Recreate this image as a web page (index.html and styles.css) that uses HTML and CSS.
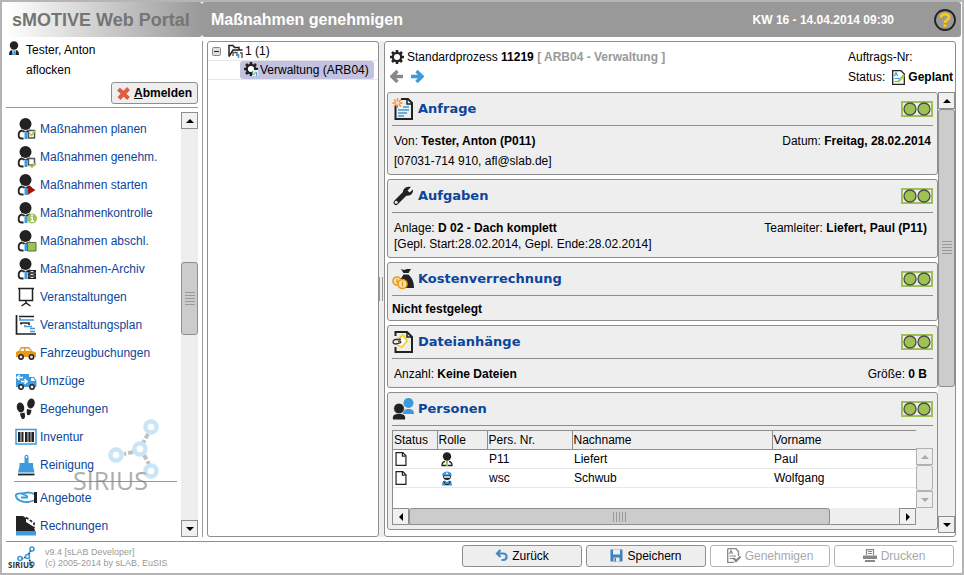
FILE: index.html
```html
<!DOCTYPE html>
<html lang="de">
<head>
<meta charset="utf-8">
<title>sMOTIVE Web Portal</title>
<link rel="stylesheet" href="styles.css">
</head>
<body>
<svg class="defs" aria-hidden="true">
  <symbol id="person" viewBox="0 0 20 22">
    <circle cx="9.500" cy="6" r="6" fill="#222"/>
    <path d="M6 12.500C3 13 2.500 15.500 2.700 18C2.800 20 4 20.500 6 20.500H7.500" fill="none" stroke="#222" stroke-width="1.800"/>
    <path d="M5 11.500L9.500 13L14 11.500L16.500 14.500H12L9.500 13.500L7 14.500Z" fill="#222"/>
    <path d="M8.500 14H11.500V21H8.500Z" fill="#3d9bdc"/>
  </symbol>
  <symbol id="gear" viewBox="0 0 16 16">
    <path d="M8 0V16M0 8H16M2.300 2.300L13.700 13.700M13.700 2.300L2.300 13.700" stroke="#222" stroke-width="3"/>
    <circle cx="8" cy="8" r="4.800" fill="#fff" stroke="#222" stroke-width="2.600"/>
  </symbol>
  <symbol id="lights" viewBox="0 0 32 16">
    <rect x="1" y="1" width="30" height="14" fill="#ececec" stroke="#9dc154" stroke-width="2"/>
    <circle cx="9" cy="8" r="6" fill="#9fc255" stroke="#4b4b4b" stroke-width="1.300"/>
    <circle cx="23" cy="8" r="6" fill="#9fc255" stroke="#4b4b4b" stroke-width="1.300"/>
  </symbol>
  <symbol id="page" viewBox="0 0 12 15">
    <path d="M.7.7H8L11.300 4V14.300H.7Z" fill="#fff" stroke="#222" stroke-width="1.300"/>
    <path d="M7.500 1V4.500H11" fill="none" stroke="#222" stroke-width="1.300"/>
  </symbol>
  <symbol id="up" viewBox="0 0 8 4"><path d="M4 0L8 4H0Z" fill="currentColor"/></symbol>
  <symbol id="down" viewBox="0 0 8 4"><path d="M0 0H8L4 4Z" fill="currentColor"/></symbol>
  <symbol id="molecule" viewBox="0 0 54 64">
    <path d="M41 17L36 26M26 35L17 37M37 38L42 47" stroke="#999" stroke-width="4" stroke-dasharray="5 2"/>
    <g fill="none" stroke="currentColor" stroke-width="4.500">
      <circle cx="44" cy="10" r="5.500"/><circle cx="33" cy="32" r="5.500"/><circle cx="9" cy="38" r="5.500"/><circle cx="44" cy="54" r="5.500"/>
    </g>
  </symbol>
</svg>

<div class="app">
  <header class="top">
    <div class="brand">sMOTIVE Web Portal</div>
    <div class="titlebar">
      <h1>Maßnahmen genehmigen</h1>
      <span class="clock">KW 16 - 14.04.2014 09:30</span>
      <button class="help" aria-label="Hilfe"><svg width="22" height="22" viewBox="0 0 22 22"><circle cx="11" cy="11" r="10" fill="#999" stroke="#222" stroke-width="1.800"/><path d="M7 8.500C7 4 15 4 15 8.200C15 11 11 10.800 11 14" fill="none" stroke="#fc0" stroke-width="2.800"/><path d="M9.500 15.500H12.500V18H9.500Z" fill="#fc0"/></svg></button>
    </div>
  </header>

  <div class="main">
    <aside class="sidebar">
      <div class="user">
        <svg width="12" height="16" viewBox="0 0 12 16"><circle cx="6" cy="4.500" r="4.200" fill="#222"/><path d="M1 14C1 11 2 9.500 4 9H8C10 9.500 11 11 11 14Z" fill="#222"/><path d="M4 9H8L7.500 14H4.500Z" fill="#a8d8f5"/><path d="M5.500 10H7V14H5.500Z" fill="#3d9bdc"/></svg>
        <div>Tester, Anton<br>aflocken</div>
      </div>
      <div class="logout"><button class="btn logout-btn"><svg width="13" height="13" viewBox="0 0 13 13"><path d="M1.500 2L11.500 11.500M11.500 1.500L2 11.500" stroke="#dd5f43" stroke-width="4"/></svg><span><u>A</u>bmelden</span></button></div>
      <div class="nav-area">
        <nav class="menu">
          <a href="#"><svg width="22" height="22"><use href="#person" x="1" width="20" height="22"/><path d="M13.500 12.500H19.500V20H13.500Z" fill="#fff" stroke="#555" stroke-width="1.500"/><path d="M14.500 15L16.500 17.500L20.500 12" fill="none" stroke="#9c5" stroke-width="1.500"/></svg>Maßnahmen planen</a>
          <a href="#"><svg width="22" height="22"><use href="#person" x="1" width="20" height="22"/><path d="M13.500 12.500H19.500V19H13.500Z" fill="#fff" stroke="#555" stroke-width="1.500"/><path d="M14.500 19L17 21L21 17" fill="none" stroke="#9c5" stroke-width="1.800"/></svg>Maßnahmen genehm.</a>
          <a href="#"><svg width="22" height="22"><use href="#person" x="1" width="20" height="22"/><path d="M12.500 11V21L20.500 16Z" fill="#a01010"/></svg>Maßnahmen starten</a>
          <a href="#"><svg width="22" height="22"><use href="#person" x="1" width="20" height="22"/><circle cx="17" cy="16.500" r="5" fill="#9fc255"/><path d="M15.500 15.500H17.300V19M15.500 19.300H19M16.200 13.300H17.900" fill="none" stroke="#fff" stroke-width="1.400"/></svg>Maßnahmenkontrolle</a>
          <a href="#"><svg width="22" height="22"><use href="#person" x="1" width="20" height="22"/><path d="M12.500 12.500H21V21H12.500Z" fill="#9fc255" stroke="#58703a"/></svg>Maßnahmen abschl.</a>
          <a href="#"><svg width="22" height="22"><use href="#person" x="1" width="20" height="22"/><path d="M13 12H21V21H13Z" fill="#222"/><path d="M13 15H21M13 18H21" stroke="#777"/><path d="M15.500 13.500H18.500M15.500 16.500H18.500M15.500 19.500H18.500" stroke="#ddd"/></svg>Maßnahmen-Archiv</a>
          <a href="#"><svg width="22" height="22" viewBox="0 0 22 22"><path d="M3 2.500H19M4.500 2.500V14.500H17.500V2.500M11 15V17M6.500 20L11 17L15.500 20" fill="none" stroke="#222" stroke-width="1.500"/></svg>Veranstaltungen</a>
          <a href="#"><svg width="22" height="22" viewBox="0 0 22 22"><path d="M1.500 1V20H21M4 2.500H19M6 10.500V9H14V11" fill="none" stroke="#222" stroke-width="1.700"/><path d="M5 4V6H19M10 11V12.500H17M15 14.500H20M15 17.500H20" fill="none" stroke="#3d9bdc" stroke-width="1.700"/></svg>Veranstaltungsplan</a>
          <a href="#"><svg width="22" height="22" viewBox="0 0 22 22"><path d="M1 14V10L4 8.500L6 5H14L17 9L21 10.500V15H1Z" fill="#e59a18"/><path d="M5 9L7 6.500H9V9ZM10.500 6.500H13.500L15.500 9H10.500Z" fill="#fff"/><circle cx="6" cy="15" r="2.200" fill="#ddd" stroke="#222" stroke-width="1.500"/><circle cx="16.500" cy="15" r="2.200" fill="#ddd" stroke="#222" stroke-width="1.500"/></svg>Fahrzeugbuchungen</a>
          <a href="#"><svg width="22" height="22" viewBox="0 0 22 22"><path d="M1 4H14V7H19L21.500 11V17H1Z" fill="#3d9bdc"/><path d="M16 8H18.500L20 11H16Z" fill="#fff"/><path d="M2 7.500H8M4.500 5L2 7.500L4.500 10M6 11.500H12M9.500 9L12 11.500L9.500 14" fill="none" stroke="#fff" stroke-width="1.500"/><circle cx="6" cy="17" r="2.200" fill="#eee" stroke="#222" stroke-width="1.500"/><circle cx="17" cy="17" r="2.200" fill="#eee" stroke="#222" stroke-width="1.500"/></svg>Umzüge</a>
          <a href="#"><svg width="22" height="22" viewBox="0 0 22 22"><g fill="#222"><ellipse cx="5.500" cy="9.500" rx="3.700" ry="5" transform="rotate(-12 5.500 9.500)"/><path d="M5 15.500L9.500 14.500C11 20 9 21.500 7.500 21C6 20.500 5.500 18 5 15.500Z"/><ellipse cx="16" cy="5.500" rx="3.700" ry="5" transform="rotate(12 16 5.500)"/><path d="M12 11L16.500 12C16 16 15 17.500 13 17.300C11.500 17 11.500 14 12 11Z"/></g></svg>Begehungen</a>
          <a href="#"><svg width="22" height="22" viewBox="0 0 22 22"><rect x="1" y="3.500" width="20" height="14.500" fill="#fff" stroke="#3d9bdc" stroke-width="1.500"/><path d="M4 6V16M7.500 6V16M11 6V16M14.500 6V16M18 6V16" stroke="#222" stroke-width="2"/><path d="M5.800 6V16M12.800 6V16M16.300 6V16" stroke="#222" stroke-width=".8"/></svg>Inventur</a>
          <a href="#"><svg width="22" height="22" viewBox="0 0 22 22"><path d="M9.500 9V3C9.500 0 13.500 0 13.500 3V9H18V12L19.500 18.500H3L4.500 12V9Z" fill="#3d9bdc"/><path d="M11.500 2V4" stroke="#fff" stroke-width="1.300"/><path d="M3 20.500H19.500" stroke="#222" stroke-width="1.800"/></svg>Reinigung</a>
          <hr>
          <a href="#"><svg width="22" height="22" viewBox="0 0 22 22"><path d="M19 7C14 4 10 6 7 6.500C3 6 0 7 1 9.500C2 13.500 8 15.500 13 15L19 13.500M7 7C10 8 13 9 12 10.500L6 10.500" fill="none" stroke="#3d9bdc" stroke-width="1.800"/><path d="M20.500 5V16" stroke="#222" stroke-width="3"/></svg>Angebote</a>
          <a href="#"><svg width="22" height="22" viewBox="0 0 22 22"><path d="M1 1H8L11 3V7L19 12L20 16H1Z" fill="#222"/><path d="M11 2.500L19 8V13" fill="none" stroke="#222" stroke-width="1.600" stroke-dasharray="3 1.500"/><path d="M1 16H21V20.500H1Z" fill="#3d9bdc"/></svg>Rechnungen</a>
        </nav>
        <div class="scroll-v nav-scroll">
          <button class="arrow" aria-label="Nach oben"><svg width="8" height="4"><use href="#up"/></svg></button>
          <div class="space-main"></div>
          <div class="thumb nav-thumb"><i class="grip"></i></div>
          <div class="space-end"></div>
          <button class="arrow" aria-label="Nach unten"><svg width="8" height="4"><use href="#down"/></svg></button>
        </div>
        <div class="watermark" aria-hidden="true"><svg width="54" height="64"><use href="#molecule"/></svg><span>SIRIUS</span></div>
      </div>
    </aside>

    <section class="tree">
      <div class="tree-row">
        <button class="toggle" aria-label="Zuklappen"><svg width="9" height="9" viewBox="0 0 9 9"><rect x=".5" y=".5" width="8" height="8" rx="1" fill="#ddd" stroke="#888"/><path d="M2 4.500H7" stroke="#222"/></svg></button>
        <svg class="folder" width="16" height="15" viewBox="0 0 16 15"><path d="M1 12.500V1.500H5L6.500 3.500H11V6M1 12.500L5 6H14.500" fill="none" stroke="#222" stroke-width="1.500"/><path d="M5 12V8.500H9V12M12 9H14V14" fill="none" stroke="#555" stroke-width="1.400"/><path d="M10.500 10V14" stroke="#3d9bdc" stroke-width="1.600"/></svg>
        <span>1 (1)</span>
      </div>
      <div class="tree-row child">
        <div class="selected"><svg width="16" height="16"><use href="#gear" width="14" height="14"/><path d="M8 8H14V14H8Z" fill="#eee"/><path d="M8.500 9V13M12.500 10V14" stroke="#3d9bdc"/><path d="M9 13L12 10" stroke="#9c5" stroke-width="1.500"/></svg>Verwaltung (ARB04)</div>
      </div>
    </section>

    <div class="splitter"><i></i></div>

    <section class="detail">
      <div class="detail-head">
        <div class="process">
          <div class="line"><svg width="14" height="14"><use href="#gear"/></svg><span>Standardprozess <b>11219</b> <b class="muted">[ ARB04 - Verwaltung ]</b></span></div>
          <div class="arrows">
            <button aria-label="Zurückblättern"><svg width="14" height="13" viewBox="0 0 14 13"><path d="M13 6.500H3M7.500 1L2 6.500L7.500 12" fill="none" stroke="#888" stroke-width="3.400"/></svg></button>
            <button aria-label="Vorblättern"><svg width="14" height="13" viewBox="0 0 14 13"><path d="M1 6.500H11M6.500 1L12 6.500L6.500 12" fill="none" stroke="#3d9bdc" stroke-width="3.400"/></svg></button>
          </div>
        </div>
        <div class="order">
          <div>Auftrags-Nr:</div>
          <div class="line"><span>Status:</span><svg width="13" height="15" viewBox="0 0 13 15"><path d="M.7.7H9L12.300 4V14.300H.7Z" fill="#fff" stroke="#222" stroke-width="1.300"/><path d="M2.500 6L4 2.500L5.500 6M2.500 8.500H8M2.500 11.500H6" fill="none" stroke="#3d9bdc" stroke-width="1.200"/><path d="M6 12L12 5" stroke="#9c5" stroke-width="2.500"/></svg><b>Geplant</b></div>
        </div>
      </div>

      <div class="cards-area">
        <div class="cards">
          <article class="card">
            <div class="card-head"><svg width="22" height="24" viewBox="0 0 22 24"><path d="M3.500 8V22H20V6L16 2H9" fill="none" stroke="#222" stroke-width="2"/><path d="M15 2V7H20" fill="none" stroke="#222" stroke-width="1.500"/><path d="M11 10H17M6 13H17M6 16H15M6 19H12" stroke="#3d9bdc" stroke-width="1.500"/><path d="M5.500 1V11M.5 6H10.500M2 2.500L9 9.500M9 2.500L2 9.500" stroke="#f08c3c" stroke-width="1.300"/><circle cx="5.500" cy="6" r="2" fill="#ffd9b8"/></svg><h2>Anfrage</h2><svg class="lights" width="32" height="16"><use href="#lights"/></svg></div>
            <div class="card-body"><div>Von: <b>Tester, Anton (P011)</b><br>[07031-714 910, afl@slab.de]</div><div>Datum: <b>Freitag, 28.02.2014</b></div></div>
          </article>
          <article class="card">
            <div class="card-head"><svg width="22" height="24" viewBox="0 0 22 24"><path d="M4 18.500L13 9.500" stroke="#222" stroke-width="5" stroke-linecap="round"/><path d="M19 3L15.500 6.500L17.500 8.500L21 5.500C21.500 9.500 18 12.500 14 11.500L11 9C10.500 5 14 1.500 19 3Z" fill="#222"/><circle cx="4.200" cy="18.300" r="1.500" fill="#eee"/></svg><h2>Aufgaben</h2><svg class="lights" width="32" height="16"><use href="#lights"/></svg></div>
            <div class="card-body tight"><div>Anlage: <b>D 02 - Dach komplett</b><br>[Gepl. Start:28.02.2014, Gepl. Ende:28.02.2014]</div><div class="lead">Teamleiter: <b>Liefert, Paul (P11)</b></div></div>
          </article>
          <article class="card">
            <div class="card-head"><svg width="22" height="24" viewBox="0 0 22 24"><path d="M9 2L12 3L15 2L19 2L16.500 6H11.500ZM11.500 7.500H16.500C21 12 22 16 22 21H12L8 13Z" fill="#222"/><circle cx="5" cy="14" r="4" fill="#f7e3b6" stroke="#e59a18" stroke-width="1.600"/><circle cx="10.500" cy="17" r="4.500" fill="#f7e3b6" stroke="#e59a18" stroke-width="1.600"/><path d="M10.500 14.500V19.500M5 12V16" stroke="#e59a18" stroke-width="1.500"/></svg><h2>Kostenverrechnung</h2><svg class="lights" width="32" height="16"><use href="#lights"/></svg></div>
            <div class="card-body flush"><b>Nicht festgelegt</b></div>
          </article>
          <article class="card">
            <div class="card-head"><svg width="22" height="24" viewBox="0 0 22 24"><path d="M3.500 6V2H15L20 7V22H3.500V17" fill="none" stroke="#222" stroke-width="2"/><path d="M15 2V7H20" fill="none" stroke="#222" stroke-width="1.500"/><path d="M6 9L11 5L15 11L10 17L5 15" fill="#fff" stroke="#f5cf1d" stroke-width="1.700"/><path d="M9 9.500H4C0 9.500 0 14 4 14L8 13C10 12 8 10.500 6 11.500" fill="none" stroke="#333" stroke-width="1.300"/></svg><h2>Dateianhänge</h2><svg class="lights" width="32" height="16"><use href="#lights"/></svg></div>
            <div class="card-body"><div>Anzahl: <b>Keine Dateien</b></div><div class="lead">Größe: <b>0 B</b></div></div>
          </article>
          <article class="card">
            <div class="card-head"><svg width="22" height="24" viewBox="0 0 22 24"><circle cx="16.500" cy="6" r="5" fill="#3d9bdc"/><path d="M11 17C11 13 13 12 16.500 12C20 12 22 13 22 17Z" fill="#3d9bdc"/><circle cx="7" cy="11.500" r="5.300" fill="#222" stroke="#eee" stroke-width=".6"/><path d="M1 22.500C0 18 3 17 7 17C11 17 14 18 13 22.500Z" fill="#222"/></svg><h2>Personen</h2><svg class="lights" width="32" height="16"><use href="#lights"/></svg></div>
            <div class="people">
              <div class="table-box">
                <table>
                  <thead><tr><th class="c-status">Status</th><th class="c-role">Rolle</th><th class="c-nr">Pers. Nr.</th><th class="c-name">Nachname</th><th>Vorname</th></tr></thead>
                  <tbody>
                    <tr><td><svg width="12" height="14"><use href="#page"/></svg></td><td><svg class="role" width="12" height="15" viewBox="0 0 12 15"><circle cx="6" cy="4.500" r="4.200" fill="#222"/><path d="M4 9.500C1 10 1 12 1 13.500H11C11 12 11 10 8 9.500" fill="#fff" stroke="#222" stroke-width="1.300"/><path d="M6 9V14" stroke="#9c5" stroke-width="2"/></svg></td><td>P11</td><td>Liefert</td><td>Paul</td></tr>
                    <tr><td><svg width="12" height="14"><use href="#page"/></svg></td><td><svg class="role" width="12" height="15" viewBox="0 0 12 15"><circle cx="6" cy="5" r="4" fill="#222"/><path d="M1 4.500C1.500-1 10.500-1 11 4.500Z" fill="#3d9bdc"/><path d="M3 6H9M5 2.500H7" stroke="#fff" stroke-width="1.300"/><path d="M1 14.500C1 11 2 10 4 9.500L6 11L8 9.500C10 10 11 11 11 14.500Z" fill="#3d9bdc"/><path d="M2.500 10L4.500 13.500H7.500L9.500 10" fill="none" stroke="#222"/></svg></td><td>wsc</td><td>Schwub</td><td>Wolfgang</td></tr>
                  </tbody>
                </table>
              </div>
              <div class="scroll-v faint">
                <button class="arrow" aria-label="Nach oben" disabled><svg width="8" height="4"><use href="#up"/></svg></button>
                <div class="thumb"></div>
                <button class="arrow" aria-label="Nach unten" disabled><svg width="8" height="4"><use href="#down"/></svg></button>
              </div>
              <div class="scroll-h">
                <button class="arrow" aria-label="Nach links"><svg width="4" height="8" viewBox="0 0 4 8"><path d="M4 0V8L0 4Z"/></svg></button>
                <div class="thumb"><i class="grip"></i></div>
                <div class="rest"></div>
                <button class="arrow" aria-label="Nach rechts"><svg width="4" height="8" viewBox="0 0 4 8"><path d="M0 0L4 4L0 8Z"/></svg></button>
              </div>
            </div>
          </article>
          <article class="card next"></article>
        </div>
        <div class="scroll-v">
          <button class="arrow" aria-label="Nach oben"><svg width="8" height="4"><use href="#up"/></svg></button>
          <div class="thumb cards-thumb"><i class="grip"></i></div>
          <div class="cards-rest"></div>
          <button class="arrow" aria-label="Nach unten"><svg width="8" height="4"><use href="#down"/></svg></button>
        </div>
      </div>
    </section>
  </div>

  <footer class="foot">
    <div class="logo"><svg width="22" height="22" viewBox="0 0 22 22"><path d="M17 4L14 10M12 11L7 13M14 11L17 17" stroke="#333" stroke-width="1.800" stroke-dasharray="2 1"/><g fill="#fff" stroke="#3d9bdc" stroke-width="1.600"><circle cx="18" cy="3" r="2"/><circle cx="13.500" cy="10.500" r="2"/><circle cx="6" cy="12.500" r="2"/><circle cx="18" cy="18" r="2"/></g></svg><span>SIRIUS</span></div>
    <div class="version">v9.4 [sLAB Developer]<br>(c) 2005-2014 by sLAB, EuSIS</div>
    <div class="actions">
      <button class="btn"><svg width="13" height="13" viewBox="0 0 13 13"><path d="M2 4.500H8C13 4.500 12.500 11 8 11H6.500M5.500 1L2 4.500L5.500 8" fill="none" stroke="#4a86c5" stroke-width="2.200"/></svg>Zurück</button>
      <button class="btn"><svg width="13" height="13" viewBox="0 0 13 13"><path d="M.5.5H12.500V12.500H.5Z" fill="#3f7fc0"/><path d="M3 .5H10V5.500H3ZM3.500 8.500H9.500V12.500H3.500Z" fill="#efefef"/><path d="M4.500 9V12.500H6V9Z" fill="#3f7fc0"/></svg>Speichern</button>
      <button class="btn" disabled><svg width="14" height="15" viewBox="0 0 14 15"><path d="M.7.7H9L11.500 3.500V8M.7.7V14.300H7" fill="none" stroke="#888" stroke-width="1.300"/><path d="M2.500 6L4 2.500L5.500 6M2.500 8H9M2.500 10.500H7" fill="none" stroke="#888" stroke-width="1.200"/><path d="M6.500 10L9 13L13.500 8.500" fill="none" stroke="#888" stroke-width="2.200"/></svg>Genehmigen</button>
      <button class="btn" disabled><svg width="14" height="13" viewBox="0 0 14 13"><path d="M3.500 6V.7H10.500V6M5 2.500H9M5 4.500H9" fill="none" stroke="#888" stroke-width="1.200"/><path d="M0 6.500H14V10H0ZM2 11H12V13H2Z" fill="#888"/></svg>Drucken</button>
    </div>
  </footer>
</div>
</body>
</html>
```

FILE: styles.css
```css
* { box-sizing: border-box; }

body {
  margin: 0;
  font: 12px/20px "Liberation Sans", Arial, sans-serif;
  color: #000;
  background: #fff;
}

.defs { position: absolute; width: 0; height: 0; }
svg { display: block; flex: none; }
button { margin: 0; padding: 0; border: 0; background: none; font: inherit; color: inherit; }
h1, h2 { margin: 0; }

.app {
  display: flex;
  flex-direction: column;
  height: 100vh;
  border: 2px solid #b5b5b5;
  padding: 0 1px 0 4px;
}

/* header */
.top { display: flex; flex: none; height: 35px; }
.brand {
  flex: none;
  width: 196px;
  padding-left: 6px;
  font: bold 18px/36px "Liberation Sans", Arial, sans-serif;
  color: #757575;
  background: linear-gradient(90deg, #fff, #999);
  border-radius: 3px;
}
.titlebar {
  display: flex;
  align-items: center;
  flex: 1;
  padding: 0 5px 0 9px;
  color: #fff;
  background: #999;
  border-radius: 3px;
}
.titlebar h1 { flex: 1; font-size: 16px; }
.clock { margin-right: 40px; font-weight: bold; }

/* columns */
.main { display: flex; flex: 1; min-height: 0; padding: 4px 5px 4px 0; }
.sidebar {
  display: flex;
  flex-direction: column;
  flex: none;
  width: 197px;
  padding-right: 4px;
  border-right: 1px solid #999;
}
.user { display: flex; gap: 6px; padding-left: 2px; }
.user div { margin-top: -1px; }
.logout {
  display: flex;
  justify-content: flex-end;
  padding: 2px 0 3px;
  border-bottom: 1px solid #999;
}
.btn {
  display: flex;
  align-items: center;
  justify-content: center;
  gap: 4px;
  width: 120px;
  height: 22px;
  border: 1px solid #8e8e8e;
  border-radius: 3px;
  background: #eee;
}
.btn:disabled { color: #a8a8a8; border-color: #b5b5b5; background: #fff; }
.logout-btn { width: 87px; font-weight: bold; }

.nav-area { position: relative; display: flex; flex: 1; min-height: 0; margin-top: 4px; }
.menu { flex: 1; padding: 3px 4px 0 8px; overflow: hidden; }
.menu a {
  display: flex;
  align-items: center;
  gap: 3px;
  height: 28px;
  padding-left: 1px;
  color: #0c459b;
  text-decoration: none;
}
.menu hr { height: 1px; margin: 2px 0; border: 0; background: #999; }
.watermark {
  position: absolute;
  left: 67px;
  bottom: 42px;
  opacity: .6;
  color: #a8d4f2;
  pointer-events: none;
}
.watermark svg { margin: 0 0 -16px 34px; }
.watermark span { display: block; color: #777; font: 25px/30px "Open Sans", sans-serif; }

/* scrollbars */
.scroll-v { display: flex; flex-direction: column; flex: none; width: 17px; background: #eee; }
.scroll-h { display: flex; height: 17px; border-bottom: 1px solid #8e8e8e; background: #eee; }
.arrow {
  display: flex;
  align-items: center;
  justify-content: center;
  flex: none;
  width: 17px;
  height: 17px;
  border: 1px solid #8e8e8e;
  background: #f0f0f0;
}
.thumb {
  display: flex;
  align-items: center;
  justify-content: center;
  border: 1px solid #8e8e8e;
  border-radius: 3px;
  background: #ccc;
}
.grip { width: 10px; height: 13px; background: repeating-linear-gradient(#999 0 1px, #ccc 1px 3px); }
.scroll-h .grip { width: 13px; height: 10px; background: repeating-linear-gradient(90deg, #999 0 1px, #ccc 1px 3px); }
.space-main { flex: 134; }
.nav-thumb { flex: 71; }
.space-end { flex: 186; }
.cards-thumb { flex: 278; }
.cards-rest { flex: 130; }

/* tree */
.tree {
  flex: none;
  width: 172px;
  margin-left: 4px;
  border: 1px solid #8e8e8e;
  border-radius: 3px;
}
.tree-row {
  display: flex;
  align-items: center;
  height: 19px;
  padding-left: 4px;
  border-bottom: 1px solid #e8e8e8;
}
.folder { margin: 0 1px 0 7px; }
.tree-row.child { justify-content: flex-end; padding-right: 4px; }
.selected {
  display: flex;
  align-items: center;
  width: 134px;
  height: 18px;
  padding-left: 4px;
  border-radius: 3px;
  background: #c3c2e0;
}
.splitter { display: flex; align-items: center; flex: none; width: 5px; background: #eee; }
.splitter i { width: 4px; height: 24px; border: solid #999; border-width: 0 1px; }

/* detail */
.detail {
  display: flex;
  flex-direction: column;
  flex: 1;
  min-width: 0;
  padding: 0 0 3px 2px;
  border: 1px solid #8e8e8e;
  border-radius: 3px;
}
.detail-head { display: flex; justify-content: space-between; flex: none; height: 50px; padding: 5px 2px 0 3px; }
.line { display: flex; align-items: center; gap: 3px; }
.muted { color: #999; }
.arrows { display: flex; gap: 6px; padding-top: 3px; }
.order .line svg { margin-left: 4px; }

.cards-area { display: flex; flex: 1; min-height: 0; }
.cards { flex: 1; min-width: 0; overflow: hidden; }
.card {
  margin-bottom: 4px;
  padding: 0 4px;
  border: 1px solid #8e8e8e;
  border-radius: 3px;
  background: #eee;
}
.card-head {
  display: flex;
  align-items: center;
  gap: 4px;
  height: 33px;
  border-bottom: 1px solid #8e8e8e;
}
.card-head h2 { flex: 1; font: bold 13px/20px "DejaVu Sans", Verdana, sans-serif; color: #0c459b; }
.card-body { display: flex; justify-content: space-between; padding: 5px 2px 3px; }
.card-body.tight { padding: 7px 2px 5px; line-height: 16px; }
.card-body.flush { padding: 3px 0 1px; }
.card-body .lead { padding-right: 4px; }

.people { display: grid; grid-template-columns: 1fr 17px; padding: 4px 0; }
.table-box {
  height: 78px;
  border: solid #8e8e8e;
  border-width: 1px 0 0 1px;
  background: #fff;
}
table { width: 100%; table-layout: fixed; border-collapse: collapse; }
th {
  height: 18px;
  padding: 1px 1px 0;
  border: solid #8e8e8e;
  border-width: 0 0 1px 1px;
  background: #eee;
  font-weight: normal;
  text-align: left;
  line-height: 17px;
}
th:first-child { border-left: 0; }
td { height: 19px; padding: 0 2px; border-bottom: 1px solid #e8e8e8; line-height: 18px; }
.role { margin-left: 2px; }
.c-status { width: 44px; }
.c-role { width: 50px; }
.c-nr { width: 85px; }
.c-name { width: 200px; }
.faint { margin-top: 18px; color: #aaa; }
.faint .arrow, .faint .thumb { border-color: #b0b0b0; background: #eee; }
.faint .thumb { flex: 1; }
.scroll-h .arrow { height: 17px; }
.scroll-h .thumb { flex: 422; height: 17px; }
.scroll-h .rest { flex: 70; }
.next { height: 20px; }

/* footer */
.foot {
  display: flex;
  align-items: center;
  flex: none;
  height: 32px;
  margin-right: 4px;
  border-top: 1px solid #8e8e8e;
}
.logo { width: 30px; padding-left: 2px; }
.logo svg { margin: 0 0 -8px 6px; }
.logo span { display: block; font: bold 8px/9px "Open Sans", sans-serif; color: #333; }
.version { flex: 1; padding-left: 9px; font-size: 9px; line-height: 11px; color: #999; }
.actions { display: flex; gap: 4px; padding: 0 3px 4px 0; }
```
